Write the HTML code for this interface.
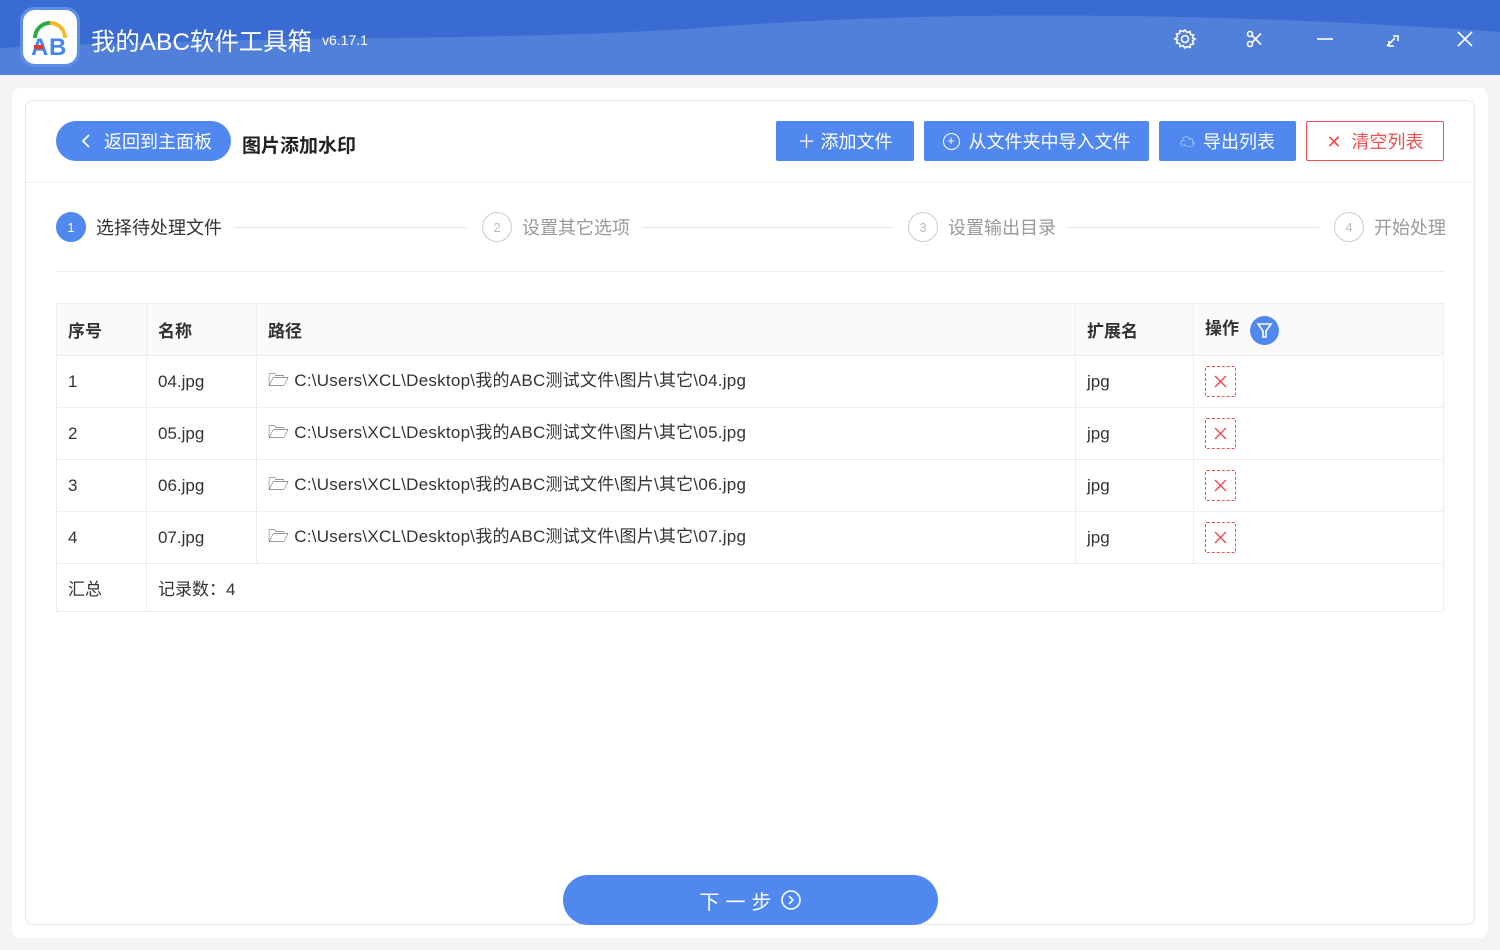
<!DOCTYPE html>
<html><head><meta charset="utf-8"><style>
*{box-sizing:border-box;margin:0;padding:0}
body{width:1500px;height:950px;background:#f3f3f3;font-family:"Liberation Sans","Noto Sans CJK SC",sans-serif;position:relative;overflow:hidden;color:#333}
.hdr{position:absolute;left:0;top:0;width:1500px;height:75px;background:#5080d9;overflow:hidden}
.abs{position:absolute}
.panel{position:absolute;left:12px;top:88px;width:1476px;height:850px;background:#fff;border-radius:8px}
.card{position:absolute;left:25px;top:100px;width:1450px;height:825px;border:1px solid #e8e8e8;border-radius:8px;background:#fff}
.btn{position:absolute;top:121px;height:40px;background:#5088f0;color:#fff;font-size:18px;display:flex;align-items:center;justify-content:center;border-radius:2px}
.step{position:absolute;top:212px;height:30px;display:flex;align-items:center;font-size:18px;color:#999}
.circ{width:30px;height:30px;border-radius:50%;border:1.5px solid #ccc;color:#bbb;font-size:13px;display:flex;align-items:center;justify-content:center;margin-right:10px}
.line{position:absolute;top:227px;height:1px;background:#e4e4e4}
table{position:absolute;left:56px;top:303px;width:1388px;border-collapse:collapse;font-size:17px}
td{border:1px solid #eee;padding-left:11px;color:#333}
tr.h td{background:#fafafa;font-weight:bold;height:52px}
tr.r td{height:52px}
.p{letter-spacing:0.25px}
.x{display:inline-block;width:31px;height:31px;border:1px dashed #f05050;border-radius:2px;vertical-align:middle;position:relative}
</style></head><body>
<div class="hdr">
<svg class="abs" style="left:0;top:0" width="1500" height="75"><path d="M0 0H1500V32C1300 18 1000 5 700 28C500 42 250 35 0 48Z" fill="#3a6bd3"/></svg>
<div class="abs" style="left:20px;top:7px;width:60px;height:60px;border-radius:14px;background:#5b8fe8;padding:3px"><div style="width:54px;height:54px;border-radius:12px;background:#fff;position:relative">
<svg width="54" height="54"><path d="M12 28A15 15 0 0 1 27 13" stroke="#2eaa4a" stroke-width="4" fill="none"/><path d="M27 13A15 15 0 0 1 42 28" stroke="#f5b92b" stroke-width="4" fill="none"/><text x="8" y="45" font-size="24" font-family="Liberation Sans" fill="#4285f4" font-weight="bold">A</text><text x="26" y="45" font-size="24" font-family="Liberation Sans" fill="#4285f4" font-weight="bold">B</text><rect x="11" y="35" width="10" height="4" fill="#e53935"/></svg></div></div>
<div class="abs" style="left:91px;top:23px;color:#fff;font-size:24.4px">我的ABC软件工具箱</div>
<div class="abs" style="left:322px;top:32px;color:#fff;font-size:14px">v6.17.1</div>
<svg class="abs" style="left:1170px;top:25px" width="310" height="28" fill="none" stroke="#fff" stroke-width="1.6">
<circle cx="15" cy="14" r="3.5"/><path d="M15 5l2 2.5 3-1 .5 3 3 .5-1 3L25 14l-2.5 2 1 3-3 .5-.5 3-3-1L15 23l-2-2.5-3 1-.5-3-3-.5 1-3L5 14l2.5-2-1-3 3-.5.5-3 3 1Z"/>
<circle cx="80" cy="19" r="2.5"/><circle cx="80" cy="9" r="2.5"/><path d="M82 10.5l9 9M82 17.5l9-9"/>
<path d="M147 14h16"/>
<path d="M217 21l8-8M219 16v5h5M223 11h5v5" />
<path d="M288 7l14 14M302 7l-14 14"/></svg>
</div>
<div class="panel"></div>
<div class="card"></div>
<div class="abs" style="left:56px;top:121px;width:175px;height:40px;border-radius:20px;background:#5088f0;color:#fff;font-size:18px;display:flex;align-items:center;padding-left:48px">返回到主面板</div>
<svg class="abs" style="left:80px;top:133px" width="12" height="16"><path d="M9 2L3 8l6 6" stroke="#fff" stroke-width="1.8" fill="none"/></svg>
<div class="abs" style="left:242px;top:131px;font-size:19px;font-weight:bold;color:#222">图片添加水印</div>
<div class="btn" style="left:776px;width:138px">＋&nbsp;添加文件</div>
<div class="btn" style="left:924px;width:225px"><span style="display:inline-block;width:17px;height:17px;border:1.5px solid #fff;border-radius:50%;font-size:13px;line-height:14px;text-align:center;margin-right:9px">+</span>从文件夹中导入文件</div>
<div class="btn" style="left:1159px;width:137px"><span style="font-size:15px;margin-right:8px">☁</span>导出列表</div>
<div class="btn" style="left:1306px;width:138px;background:#fff;border:1px solid #f05050;color:#f05050">✕&nbsp;&nbsp;清空列表</div>
<div class="abs" style="left:26px;top:182px;width:1448px;height:1px;background:#eee"></div>
<div class="step" style="left:56px;color:#333"><div class="circ" style="background:#5088f0;border-color:#5088f0;color:#fff">1</div>选择待处理文件</div>
<div class="line" style="left:234px;width:233px"></div>
<div class="step" style="left:482px"><div class="circ">2</div>设置其它选项</div>
<div class="line" style="left:642px;width:251px"></div>
<div class="step" style="left:908px"><div class="circ">3</div>设置输出目录</div>
<div class="line" style="left:1068px;width:251px"></div>
<div class="step" style="left:1334px"><div class="circ">4</div>开始处理</div>
<div class="abs" style="left:56px;top:271px;width:1388px;height:1px;background:#eee"></div>
<table>
<tr class="h"><td style="width:90px">序号</td><td style="width:110px">名称</td><td style="width:819px">路径</td><td style="width:118px">扩展名</td><td>操作 <span style="display:inline-block;width:29px;height:29px;border-radius:50%;background:#5088f0;vertical-align:middle;margin-left:6px;position:relative"><svg width="29" height="29"><path d="M8 8h13l-5 7v6h-3v-6Z" stroke="#fff" stroke-width="1.6" fill="none"/></svg></span></td></tr>
<tr class="r"><td>1</td><td>04.jpg</td><td class="p">🗁&nbsp;C:\Users\XCL\Desktop\我的ABC测试文件\图片\其它\04.jpg</td><td>jpg</td><td><span class="x"><svg width="29" height="29"><path d="M9 9l11 11M20 9L9 20" stroke="#f05050" stroke-width="1.5"/></svg></span></td></tr>
<tr class="r"><td>2</td><td>05.jpg</td><td class="p">🗁&nbsp;C:\Users\XCL\Desktop\我的ABC测试文件\图片\其它\05.jpg</td><td>jpg</td><td><span class="x"><svg width="29" height="29"><path d="M9 9l11 11M20 9L9 20" stroke="#f05050" stroke-width="1.5"/></svg></span></td></tr>
<tr class="r"><td>3</td><td>06.jpg</td><td class="p">🗁&nbsp;C:\Users\XCL\Desktop\我的ABC测试文件\图片\其它\06.jpg</td><td>jpg</td><td><span class="x"><svg width="29" height="29"><path d="M9 9l11 11M20 9L9 20" stroke="#f05050" stroke-width="1.5"/></svg></span></td></tr>
<tr class="r"><td>4</td><td>07.jpg</td><td class="p">🗁&nbsp;C:\Users\XCL\Desktop\我的ABC测试文件\图片\其它\07.jpg</td><td>jpg</td><td><span class="x"><svg width="29" height="29"><path d="M9 9l11 11M20 9L9 20" stroke="#f05050" stroke-width="1.5"/></svg></span></td></tr>
<tr style="height:48px"><td>汇总</td><td colspan="4">记录数：4</td></tr>
</table>
<div class="abs" style="left:563px;top:875px;width:375px;height:50px;border-radius:25px;background:#5088f0;color:#fff;font-size:20px;display:flex;align-items:center;justify-content:center;letter-spacing:6px">下一步<svg width="22" height="22" style="margin-left:2px"><circle cx="11" cy="11" r="9" stroke="#fff" stroke-width="1.6" fill="none"/><path d="M9 7l4 4-4 4" stroke="#fff" stroke-width="1.6" fill="none"/></svg></div>
</body></html>
